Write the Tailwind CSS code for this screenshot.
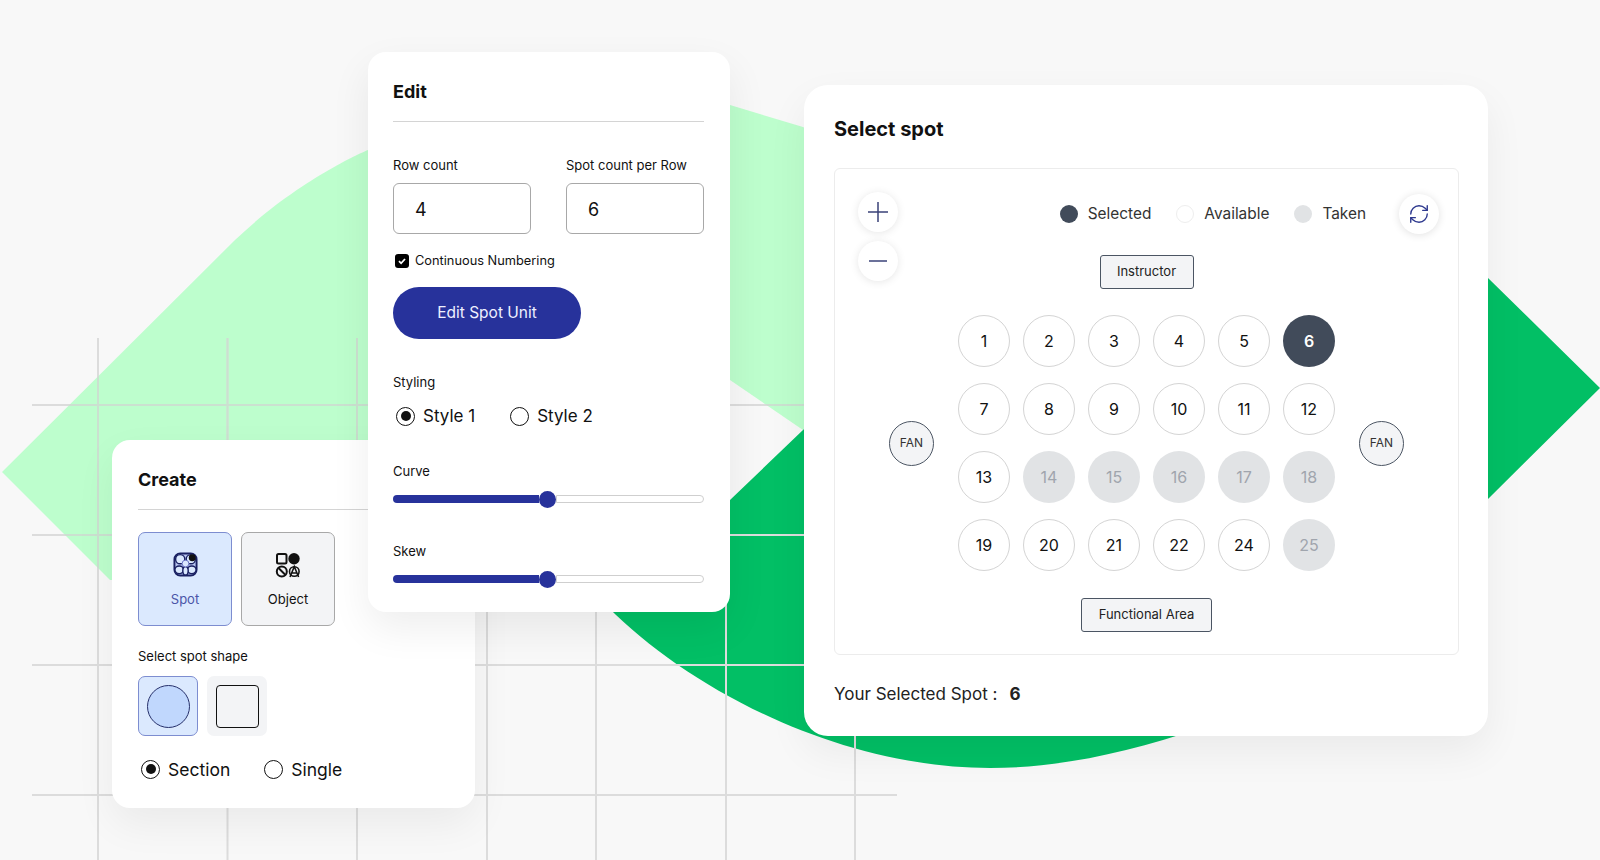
<!DOCTYPE html>
<html lang="en">
<head>
    <meta charset="UTF-8">
    <meta name="viewport" content="width=device-width, initial-scale=1.0">
    <title>Select spot</title>
    <script src="https://cdn.jsdelivr.net/npm/@tailwindcss/browser@4"></script>
</head>
<body class="bg-[#f8f8f8] text-[#111] font-[Inter,sans-serif]">
<div class="relative w-[1600px] h-[860px] overflow-hidden">

    <!-- Background leaves and grid -->
    <svg class="absolute inset-0" width="1600" height="860" viewBox="0 0 1600 860" fill="none">
        <defs>
            <clipPath id="light-leaf"><path d="M2 472L235 240C300 178 368 150 368 150C470 108 620 80 730 105L803 127L1000 250L803 430L730 380C650 330 560 300 500 400L112 580L110 580Z"/></clipPath>
            <g id="grid-lines">
                <path d="M98 338V860M227.500 338V860M357 338V860M487 338V860M596 338V860M726 338V860M855 338V860"/>
                <path d="M32 405H897M32 535H897M32 665H897M32 795H897"/>
            </g>
        </defs>
        <path fill="#bdfecd" d="M2 472L235 240C300 178 368 150 368 150C470 108 620 80 730 105L803 127L1000 250L803 430L730 380C650 330 560 300 500 400L112 580L110 580Z"/>
        <path fill="#02bf65" d="M1600 388L1488 278L1000 250L803 430L730 500L608 607C690 690 840 768 990 768C1060 768 1130 752 1200 728L1488 499Z"/>
        <use href="#grid-lines" stroke="#dcdcdc" stroke-width="2"/>
        <g clip-path="url(#light-leaf)"><use href="#grid-lines" stroke="#cbe0d0" stroke-width="2"/></g>
    </svg>

    <!-- Create card -->
    <section class="absolute left-[112px] top-[440px] w-[363px] h-[368px] bg-white rounded-[18px] pl-[26px] pr-[26px] shadow-[0_16px_40px_rgba(0,0,0,0.06)]">
        <h2 class="pt-[28px] pb-[17px] border-b border-[#d4d4d4] text-[18px] leading-[24px] font-bold">Create</h2>
        <div class="flex gap-[9px] mt-[22px]">
            <div class="w-[94px] h-[94px] flex flex-col items-center rounded-[7px] border border-[#7d8dd0] bg-[#dbe9fe]">
                <svg class="mt-[19px]" width="25" height="25" viewBox="0 0 26 26" fill="none" stroke="#1a2162" stroke-width="1.500">
                    <rect x="1.500" y="1.500" width="23" height="23" rx="6" fill="#b9c6f2" stroke-width="2"/>
                    <circle cx="7.500" cy="7.500" r="4.800" fill="#dbe9fe"/>
                    <circle cx="18.500" cy="7.500" r="4.800" fill="#dbe9fe"/>
                    <circle cx="20" cy="6" r="3.600" fill="#111" stroke="none"/>
                    <ellipse cx="6.500" cy="18.500" rx="4.500" ry="4" fill="#dbe9fe"/>
                    <ellipse cx="19.500" cy="18.500" rx="4.500" ry="4" fill="#dbe9fe"/>
                    <ellipse cx="13" cy="19.500" rx="2.800" ry="4.500" fill="#dbe9fe"/>
                    <circle cx="13" cy="12" r="3.500" fill="#dbe9fe" stroke="#6a76c4" stroke-width="1"/>
                </svg>
                <span class="mt-[13px] text-[13px] leading-[18px] text-[#4a55a8]">Spot</span>
            </div>
            <div class="w-[94px] h-[94px] flex flex-col items-center rounded-[7px] border border-[#a8a8a8] bg-[#f3f4f6]">
                <svg class="mt-[19px]" width="26" height="26" viewBox="0 0 26 26" fill="none" stroke="#111" stroke-width="2">
                    <rect x="2" y="2" width="9.500" height="9.500" rx="1.500"/>
                    <circle cx="19" cy="6.800" r="5.700" fill="#111" stroke="none"/>
                    <circle cx="6.800" cy="19.500" r="5"/>
                    <path d="M3.500 16l7 7"/>
                    <circle cx="19.300" cy="19.500" r="4.800" stroke-width="1.600"/>
                    <path d="M15 25l4.300-10.500L23.600 25M16.500 21h5.500" stroke-width="1.600"/>
                </svg>
                <span class="mt-[12px] text-[13px] leading-[18px]">Object</span>
            </div>
        </div>
        <p class="mt-[22px] text-[13px] leading-[16px]">Select spot shape</p>
        <div class="flex gap-[9px] mt-[12px]">
            <div class="w-[60px] h-[60px] flex items-center justify-center rounded-[7px] border border-[#7d8dd0] bg-[#dbe9fe]">
                <div class="w-[43px] h-[43px] rounded-full border border-[#26306b] bg-[#c0d7fd]"></div>
            </div>
            <div class="w-[60px] h-[60px] flex items-center justify-center rounded-[7px] bg-[#f3f4f6]">
                <div class="w-[43px] h-[43px] rounded-[4px] border border-[#111] bg-[#f3f4f6]"></div>
            </div>
        </div>
        <div class="flex items-center h-[22px] mt-[22px] pl-[3px] text-[17.500px]">
            <span class="w-[19px] h-[19px] flex items-center justify-center rounded-full border-[1.500px] border-[#111]"><span class="w-[10px] h-[10px] rounded-full bg-[#111]"></span></span>
            <span class="ml-[8px] pt-[3px]">Section</span>
            <span class="ml-[34px] w-[19px] h-[19px] rounded-full border-[1.500px] border-[#111]"></span>
            <span class="ml-[8px] pt-[3px]">Single</span>
        </div>
    </section>

    <!-- Edit card -->
    <section class="absolute left-[368px] top-[52px] w-[362px] h-[560px] bg-white rounded-[18px] pl-[25px] pr-[26px] shadow-[0_16px_40px_rgba(0,0,0,0.07)]">
        <h2 class="pt-[28px] pb-[17px] border-b border-[#d4d4d4] text-[18px] leading-[24px] font-bold">Edit</h2>
        <div class="flex justify-between mt-[35px]">
            <label class="w-[138px] block">
                <span class="block text-[13px] leading-[16px] whitespace-nowrap">Row count</span>
                <span class="flex items-center mt-[10px] h-[51px] pl-[21px] pt-[2px] rounded-[6px] border border-[#a8a8a8] text-[18px]">4</span>
            </label>
            <label class="w-[138px] block">
                <span class="block text-[13px] leading-[16px] whitespace-nowrap">Spot count per Row</span>
                <span class="flex items-center mt-[10px] h-[51px] pl-[21px] pt-[2px] rounded-[6px] border border-[#a8a8a8] text-[18px]">6</span>
            </label>
        </div>
        <div class="flex items-center h-[16px] mt-[19px] pl-[2px] text-[12.800px]">
            <span class="w-[14px] h-[14px] flex items-center justify-center rounded-[3px] bg-black">
                <svg width="10" height="10" viewBox="0 0 10 10" fill="none" stroke="#fff" stroke-width="1.800"><path d="M2 5.200l2.100 2.100L8 3"/></svg>
            </span>
            <span class="ml-[6px]">Continuous Numbering</span>
        </div>
        <button class="block w-[188px] h-[52px] mt-[18px] rounded-full bg-[#27329b] text-[15.500px] text-[#eef0ff]">Edit Spot Unit</button>
        <p class="mt-[35px] text-[13px] leading-[16px]">Styling</p>
        <div class="flex items-center h-[22px] mt-[15px] pl-[3px] text-[17px]">
            <span class="w-[19px] h-[19px] flex items-center justify-center rounded-full border-[1.500px] border-[#111]"><span class="w-[10px] h-[10px] rounded-full bg-[#111]"></span></span>
            <span class="ml-[8px] pt-[2px]">Style 1</span>
            <span class="ml-[35px] w-[19px] h-[19px] rounded-full border-[1.500px] border-[#111]"></span>
            <span class="ml-[8px] pt-[2px]">Style 2</span>
        </div>
        <p class="mt-[36px] text-[13px] leading-[16px]">Curve</p>
        <div class="flex items-center h-[18px] mt-[11px]">
            <div class="w-[146px] h-[8px] rounded-l-full bg-[#27329b]"></div>
            <div class="w-[17px] h-[17px] rounded-full bg-[#27329b]"></div>
            <div class="flex-1 h-[8px] rounded-r-full border border-[#cfcfcf] bg-white"></div>
        </div>
        <p class="mt-[35px] text-[13px] leading-[16px]">Skew</p>
        <div class="flex items-center h-[18px] mt-[11px]">
            <div class="w-[146px] h-[8px] rounded-l-full bg-[#27329b]"></div>
            <div class="w-[17px] h-[17px] rounded-full bg-[#27329b]"></div>
            <div class="flex-1 h-[8px] rounded-r-full border border-[#cfcfcf] bg-white"></div>
        </div>
    </section>

    <!-- Select spot card -->
    <section class="absolute left-[804px] top-[85px] w-[684px] h-[651px] bg-white rounded-[24px] pl-[30px] pr-[29px] shadow-[0_16px_40px_rgba(0,0,0,0.06)]">
        <h2 class="pt-[30px] text-[20px] leading-[28px] font-bold">Select spot</h2>
        <div class="relative mt-[25px] h-[487px] rounded-[6px] border border-[#ececec] flex flex-col items-center">
            <!-- Zoom controls sit over the seat map -->
            <div class="absolute left-[23px] top-[23px] flex flex-col gap-[9px]">
                <button class="w-[40px] h-[40px] flex items-center justify-center rounded-full bg-white shadow-[0_1px_8px_rgba(0,0,0,0.10)]">
                    <svg width="22" height="22" viewBox="0 0 22 22" fill="none" stroke="#3a4278" stroke-width="1.500"><path d="M11 1v20M1 11h20"/></svg>
                </button>
                <button class="w-[40px] h-[40px] flex items-center justify-center rounded-full bg-white shadow-[0_1px_8px_rgba(0,0,0,0.10)]">
                    <svg width="22" height="22" viewBox="0 0 22 22" fill="none" stroke="#3a4278" stroke-width="1.500"><path d="M2 11h18"/></svg>
                </button>
            </div>

            <div class="self-end flex items-center h-[40px] mt-[25px] pr-[19px] text-[15.400px] text-[#333]">
                <span class="w-[18px] h-[18px] rounded-full bg-[#414b5a]"></span>
                <span class="ml-[10px]">Selected</span>
                <span class="ml-[25px] w-[18px] h-[18px] rounded-full bg-white border border-[#eeeeee]"></span>
                <span class="ml-[10px]">Available</span>
                <span class="ml-[25px] w-[18px] h-[18px] rounded-full bg-[#e1e3e5]"></span>
                <span class="ml-[10px]">Taken</span>
                <button class="ml-[33px] w-[40px] h-[40px] flex items-center justify-center rounded-full bg-white shadow-[0_1px_8px_rgba(0,0,0,0.12)]">
                    <svg width="22" height="22" viewBox="0 0 24 24" fill="none" stroke="#2f3a8f" stroke-width="1.500" stroke-linecap="round" stroke-linejoin="round"><path d="M3 12a9 9 0 0 1 9-9 9.750 9.750 0 0 1 6.740 2.740L21 8"/><path d="M21 3v5h-5"/><path d="M21 12a9 9 0 0 1-9 9 9.750 9.750 0 0 1-6.740-2.740L3 16"/><path d="M8 16H3v5"/></svg>
                </button>
            </div>

            <div class="flex items-center justify-center w-[94px] h-[34px] mt-[21px] rounded-[3px] border border-[#4b5563] bg-[#f3f4f6] text-[13px] text-[#222]">Instructor</div>

            <div class="flex items-center gap-[24px] mt-[26px]">
                <div class="w-[45px] h-[45px] flex items-center justify-center rounded-full border border-[#4b5563] bg-[#f3f4f6] text-[12px] text-[#333]">FAN</div>
                <div id="seats" class="grid grid-cols-[repeat(6,52px)] gap-x-[13px] gap-y-[16px]"></div>
                <div class="w-[45px] h-[45px] flex items-center justify-center rounded-full border border-[#4b5563] bg-[#f3f4f6] text-[12px] text-[#333]">FAN</div>
            </div>

            <div class="flex items-center justify-center w-[131px] h-[34px] mt-[27px] rounded-[3px] border border-[#4b5563] bg-[#f3f4f6] text-[13px] text-[#222]">Functional Area</div>
        </div>
        <p class="mt-[26px] text-[17px] leading-[26px] text-[#222]">Your Selected Spot :<span class="ml-[12px] font-bold">6</span></p>
    </section>
</div>

<script>
    // Seat numbering skips 23, same as the layout being shown
    const seats = [1,2,3,4,5,6,7,8,9,10,11,12,13,14,15,16,17,18,19,20,21,22,24,25];
    const taken = [14,15,16,17,18,25];
    const selected = 6;

    const base = 'w-[52px] h-[52px] flex items-center justify-center rounded-full text-[16px] ';
    const styles = {
        selected: 'bg-[#414b5a] text-white font-semibold',
        taken: 'bg-[#e1e3e5] text-[#a0a5ad]',
        open: 'bg-white border border-[#d4d4d4] text-[#111]'
    };

    const seatGrid = document.getElementById('seats');
    seats.forEach(n => {
        const div = document.createElement('div');
        const state = n === selected ? 'selected' : taken.includes(n) ? 'taken' : 'open';
        div.className = base + styles[state];
        div.textContent = n;
        seatGrid.appendChild(div);
    });
</script>
</body>
</html>
